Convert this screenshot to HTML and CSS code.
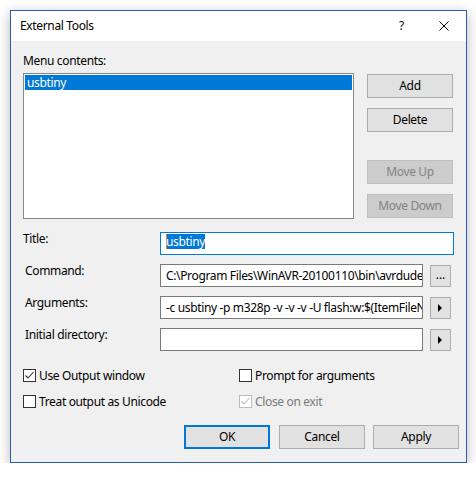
FILE: index.html
```html
<!DOCTYPE html>
<html>
<head>
<meta charset="utf-8">
<link rel="stylesheet" href="styles.css">
</head>
<body>
<div class="dlg">
  <div class="titlebar">
    <span class="ttl">External Tools</span>
    <span class="help">?</span>
    <svg class="close" width="10" height="10" viewBox="0 0 10 10"><path d="M0.5 0.5 L9.5 9.5 M9.5 0.5 L0.5 9.5" stroke="#000" stroke-width="1" fill="none"/></svg>
  </div>
  <div class="body">
    <div class="top">
      <div class="left">
        <div class="menu-lbl">Menu contents:</div>
        <div class="list"><div class="item">usbtiny</div></div>
      </div>
      <div class="btncol">
        <div class="btn">Add</div>
        <div class="btn mt10">Delete</div>
        <div class="btn dis mt28">Move Up</div>
        <div class="btn dis mt10">Move Down</div>
      </div>
    </div>
    <div class="fields">
      <div class="row">
        <div class="lbl first">Title:</div>
        <div class="tb focus wide"><span class="sel">usbtiny</span></div>
      </div>
      <div class="row">
        <div class="lbl">Command:</div>
        <div class="tb"><span class="clip">C:\Program Files\WinAVR-20100110\bin\avrdude.exe</span></div>
        <div class="sbtn dots">...</div>
      </div>
      <div class="row">
        <div class="lbl">Arguments:</div>
        <div class="tb"><span class="clip">-c usbtiny -p m328p -v -v -v -U flash:w:$(ItemFileName).hex</span></div>
        <div class="sbtn"><svg width="5" height="8" viewBox="0 0 5 8"><polygon points="0,0 4,4 0,8" fill="#000"/></svg></div>
      </div>
      <div class="row">
        <div class="lbl">Initial directory:</div>
        <div class="tb"></div>
        <div class="sbtn"><svg width="5" height="8" viewBox="0 0 5 8"><polygon points="0,0 4,4 0,8" fill="#000"/></svg></div>
      </div>
    </div>
    <div class="checks">
      <div class="chk"><span class="box"><svg width="11" height="11" viewBox="0 0 11 11"><path d="M1.5 5.5 L4 8 L9.5 2" stroke="#333" stroke-width="1.1" fill="none"/></svg></span><span>Use Output window</span></div>
      <div class="chk"><span class="box"></span><span>Prompt for arguments</span></div>
      <div class="chk"><span class="box"></span><span>Treat output as Unicode</span></div>
      <div class="chk dis"><span class="box"><svg width="11" height="11" viewBox="0 0 11 11"><path d="M1.5 5.5 L4 8 L9.5 2" stroke="#bcbcbc" stroke-width="1.1" fill="none"/></svg></span><span>Close on exit</span></div>
    </div>
    <div class="actions">
      <div class="btn def">OK</div>
      <div class="btn ml9">Cancel</div>
      <div class="btn ml8">Apply</div>
    </div>
  </div>
</div>
</body>
</html>
```
FILE: styles.css
```css
* { box-sizing: border-box; }
html, body { margin: 0; padding: 0; background: #fff; }
body {
  font-family: "Noto Sans", "Open Sans", sans-serif;
  font-size: 12px;
  letter-spacing: -0.35px;
  color: #000;
  padding: 10px 0 0 10px;
}
.dlg {
  width: 457px;
  height: 453px;
  border: 1px solid #2b5ea6;
  background: #f0f0f0;
  box-shadow: 0 3px 12px rgba(0,0,0,0.28);
  display: flex;
  flex-direction: column;
}
.titlebar {
  height: 30px;
  flex: none;
  background: #fff;
  display: flex;
  align-items: center;
  padding-left: 9px;
}
.ttl { flex: 1; line-height: 16px; }
.help { width: 40px; line-height: 16px; }
.close { margin-right: 17px; display: block; }
.body { flex: 1; padding: 12px 0 0 12px; }
.top { display: flex; }
.left { width: 331px; }
.menu-lbl { line-height: 16px; height: 16px; margin-bottom: 4px; }
.list {
  height: 146px;
  border: 1px solid #828790;
  background: #fff;
  padding: 1px;
}
.item {
  height: 15px;
  line-height: 15px;
  padding-left: 2px;
  background: #0078d7;
  color: #fff;
}
.btncol {
  margin-left: 13px;
  padding-top: 21px;
  width: 86px;
  display: flex;
  flex-direction: column;
}
.btn {
  width: 86px;
  height: 24px;
  border: 1px solid #adadad;
  background: #e1e1e1;
  display: flex;
  align-items: center;
  justify-content: center;
  line-height: 16px;
}
.btn.dis { background: #cccccc; border-color: #bfbfbf; color: #838383; }
.btn.def { border: 2px solid #0078d7; }
.mt10 { margin-top: 10px; }
.mt28 { margin-top: 28px; }
.ml9 { margin-left: 9px; }
.ml8 { margin-left: 8px; }
.fields {
  margin-top: 13px;
  display: flex;
  flex-direction: column;
  gap: 9px;
}
.row { display: flex; align-items: flex-start; height: 23px; }
.lbl { width: 137px; line-height: 16px; margin-top: -1px; padding-left: 2px; }
.lbl.first { padding-left: 0; }
.tb {
  width: 263px;
  height: 23px;
  border: 1px solid #7a7a7a;
  background: #fff;
  padding-left: 5px;
  line-height: 21px;
  white-space: nowrap;
  overflow: hidden;
}
.clip { display: block; width: 256px; overflow: hidden; white-space: nowrap; }
.tb.wide { width: 294px; }
.tb.focus { border-color: #0078d7; }
.sel {
  display: inline-block;
  background: #0078d7;
  color: #fff;
  line-height: 15px;
  height: 15px;
  vertical-align: top;
  margin-top: 1px;
  box-shadow: inset 1px 0 0 #e8801a;
}
.sbtn {
  width: 21px;
  height: 22px;
  margin-left: 7px;
  margin-top: 1px;
  border: 1px solid #adadad;
  background: #e1e1e1;
  display: flex;
  align-items: center;
  justify-content: center;
}
.sbtn svg { display: block; }
.dots { line-height: 16px; padding-bottom: 2px; letter-spacing: 0; }
.checks {
  margin-top: 17px;
  display: grid;
  grid-template-columns: 216px auto;
  row-gap: 11px;
}
.chk { display: flex; align-items: center; height: 15px; line-height: 16px; }
.box {
  width: 13px;
  height: 13px;
  border: 1px solid #333;
  background: #fff;
  margin-right: 3px;
  flex: none;
  display: flex;
  align-items: center;
  justify-content: center;
}
.box svg { display: block; }
.chk.dis { color: #7a7a7a; }
.chk.dis .box { border-color: #bcbcbc; }
.actions { margin-top: 16px; margin-left: 161px; display: flex; }
```
